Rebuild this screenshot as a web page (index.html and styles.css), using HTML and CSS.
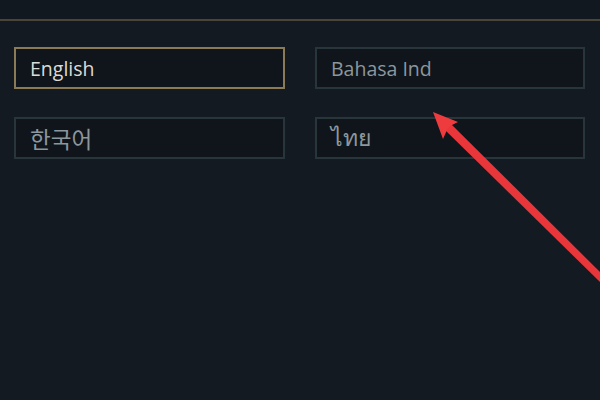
FILE: index.html
```html
<!DOCTYPE html>
<html>
<head>
<meta charset="utf-8">
<link rel="stylesheet" href="styles.css">
</head>
<body>
<div class="page">
  <div class="topbar"></div>
  <div class="langs">
    <div class="lang selected">English</div>
    <div class="lang">Bahasa Ind</div>
    <div class="lang lang-ko">한국어</div>
    <div class="lang lang-th">ไทย</div>
  </div>
  <svg class="arrow" width="600" height="400" viewBox="0 0 600 400">
    <polygon points="444,129 450,123 602,274 602,284" fill="#e8363a"/>
    <polygon points="433,112 458,122 450,126 447,130 443,139" fill="#ee3b3e"/>
  </svg>
</div>
</body>
</html>
```
FILE: styles.css
```css
html, body {
  margin: 0;
  padding: 0;
  background: #141a21;
}
.page {
  position: relative;
  width: 600px;
  height: 400px;
  overflow: hidden;
  background: #141a21;
  font-family: "Open Sans", "Noto Sans", "Noto Sans CJK KR", "DejaVu Sans", sans-serif;
}
.topbar {
  height: 19px;
  background: #121820;
  border-bottom: 2px solid #4a4539;
}
.langs {
  display: grid;
  grid-template-columns: 271px 270px;
  grid-auto-rows: 42px;
  column-gap: 30px;
  row-gap: 28px;
  padding: 26px 0 0 14px;
}
.lang {
  box-sizing: border-box;
  border: 2px solid #28353b;
  background: #10151b;
  color: #8c979d;
  font-size: 19.5px;
  font-weight: 500;
  display: flex;
  align-items: center;
  padding-left: 14px;
}
.lang.selected {
  border-color: #8a7a56;
  color: #dcdcd6;
}
.lang-ko {
  font-family: "Noto Sans CJK KR", sans-serif;
  font-size: 22.5px;
  font-weight: 400;
}
.lang-th {
  font-size: 23px;
}
.arrow {
  position: absolute;
  left: 0;
  top: 0;
}
```
